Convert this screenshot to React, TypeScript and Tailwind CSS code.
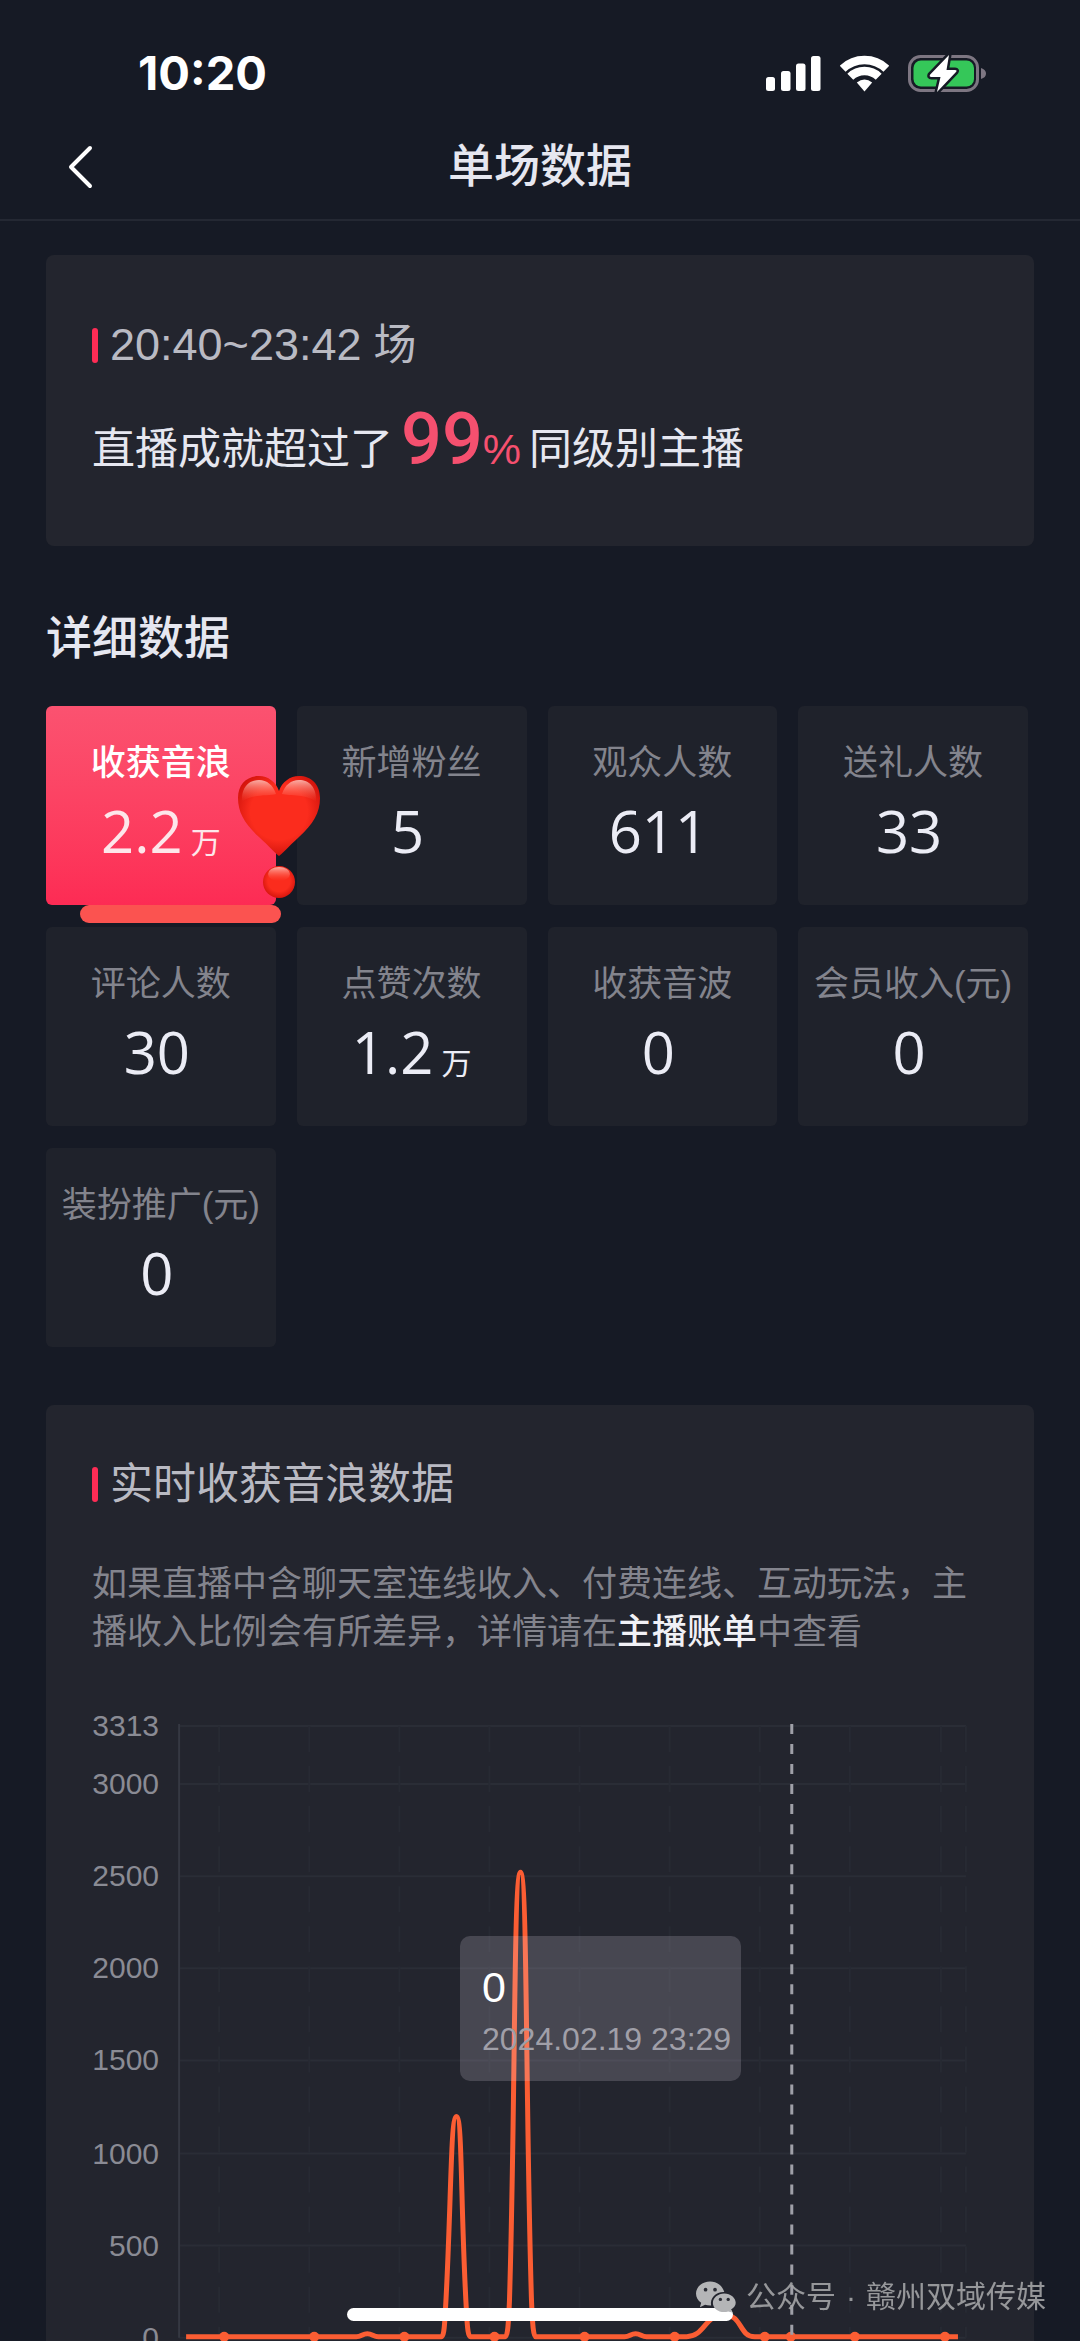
import { useState } from 'react';
import clsx from 'clsx';

const metrics = [
  { label: '收获音浪', value: '2.2', unit: '万' },
  { label: '新增粉丝', value: '5', unit: '' },
  { label: '观众人数', value: '611', unit: '' },
  { label: '送礼人数', value: '33', unit: '' },
  { label: '评论人数', value: '30', unit: '' },
  { label: '点赞次数', value: '1.2', unit: '万' },
  { label: '收获音波', value: '0', unit: '' },
  { label: '会员收入(元)', value: '0', unit: '' },
  { label: '装扮推广(元)', value: '0', unit: '' },
];

// 图表刻度
const yTicks = [3313, 3000, 2500, 2000, 1500, 1000, 500, 0];
const xTicks = [127, 217, 307, 397, 487, 577, 667, 757, 848, 873];
const dots = [132, 222, 312, 402, 492, 582, 672, 698, 762, 852];
const yPos = (value: number) => Math.round(633 - value * 0.1844);

function StatusIcons() {
  return (
    <div className="flex items-center gap-[19px]">
      <svg width="55" height="37" viewBox="0 0 55 37" fill="#fff">
        <rect x="0" y="22" width="9" height="14" rx="2.5" />
        <rect x="15" y="16" width="9.5" height="20" rx="2.5" />
        <rect x="30" y="8.5" width="9.5" height="27.5" rx="2.5" />
        <rect x="45" y="1" width="9.5" height="35" rx="2.5" />
      </svg>
      <svg width="49" height="37" viewBox="0 0 49 37" fill="none" stroke="#fff" strokeWidth="8.5">
        <path d="M2.6 13.8A31.5 31.5 0 0 1 46.4 13.8" />
        <path d="M10.3 21.8A20.5 20.5 0 0 1 38.7 21.8" />
        <path d="M24.5 36.5L16.8 27.6Q24.5 21.5 32.2 27.6Z" fill="#fff" stroke="none" />
      </svg>
      <svg width="78" height="37" viewBox="0 0 78 37">
        <rect x="1.5" y="1.5" width="68" height="34" rx="11" fill="none" stroke="#7d7682" strokeWidth="3" />
        <rect x="5.5" y="5.5" width="60.5" height="26" rx="7.5" fill="#35c759" />
        <path d="M73 13Q78 14.5 78 18.5Q78 22.5 73 24Z" fill="#7d7682" />
        <path
          d="M41 0L22 19.8Q21 22 23.4 22L32.5 22L29 37L48 17Q49.5 15 47 15L38.5 15Z"
          fill="#fff"
          stroke="#161a25"
          strokeWidth="5"
          strokeLinejoin="round"
          paintOrder="stroke"
        />
      </svg>
    </div>
  );
}

function HeartSticker() {
  return (
    <svg className="absolute top-[70px] left-[192px] z-10" width="82" height="122" viewBox="0 0 82 122">
      <defs>
        <radialGradient id="heart" cx="0.5" cy="0.45" r="0.58">
          <stop offset="0.6" stopColor="#fb2c1d" />
          <stop offset="1" stopColor="#d0120b" />
        </radialGradient>
        <linearGradient id="shine" x1="0" y1="0" x2="0" y2="1">
          <stop offset="0" stopColor="#ffd0c8" stopOpacity="0.8" />
          <stop offset="1" stopColor="#ff5a45" stopOpacity="0" />
        </linearGradient>
      </defs>
      <path
        d="M41 80C39 79 32 71 21 61C7 48 0 37 0 22C0 8 9 0 21 0C30 0 38 6 41 15C44 6 52 0 61 0C73 0 82 8 82 22C82 37 75 48 61 61C50 71 43 79 41 80Z"
        fill="url(#heart)"
      />
      <path d="M4 26C3 11 11 4 21 4C29 4 35 9 38 18C31 20 12 18 4 26Z" fill="url(#shine)" />
      <path d="M44 18C47 9 53 4 61 4C71 4 79 11 78 26C70 18 51 20 44 18Z" fill="url(#shine)" />
      <circle cx="41" cy="106" r="16" fill="url(#heart)" />
      <ellipse cx="41" cy="98" rx="11" ry="7" fill="url(#shine)" />
    </svg>
  );
}

function CardTitle({ children }: { children: React.ReactNode }) {
  return (
    <h2 className="flex items-center gap-3 text-[43px] leading-[56px] text-[#b9bac3]">
      <span className="h-[35px] w-1.5 rounded-sm bg-[#fe2c55]" />
      {children}
    </h2>
  );
}

function Chart() {
  return (
    <div className="relative mt-12">
      <svg className="block w-full" viewBox="0 0 895 636">
        {yTicks.map((tick) => (
          <g key={tick}>
            <text x="67" y={yPos(tick) + 10} textAnchor="end" fontSize="30" fill="#8a8b94">
              {tick}
            </text>
            <line x1="87" x2="873" y1={yPos(tick)} y2={yPos(tick)} stroke="#2a2d36" strokeWidth="2" />
          </g>
        ))}
        {xTicks.map((x) => (
          <line key={x} x1={x} x2={x} y1="22" y2="633" stroke="#272a33" strokeWidth="2" strokeDasharray="26 14" />
        ))}
        <line x1="87" x2="87" y1="20" y2="633" stroke="#353842" strokeWidth="2" />

        {/* 音浪曲线 */}
        <path
          d="M94 632H264C269 632 270 629 275 629C280 629 281 632 286 632H349C351 632 352 626 353 606C359 500 358 412 364 412C370 412 368 500 374 606C375 626 376 632 378 632H413C415 632 416 620 417 596C423 400 421 168 428 168C435 168 433 400 439 596C440 620 441 632 443 632H532C537 632 538 629 543 629C548 629 549 632 554 632H594C612 632 612 610 631 610C650 610 646 632 662 632H865"
          fill="none"
          stroke="#fb5d33"
          strokeWidth="5"
          strokeLinejoin="round"
        />
        {dots.map((x) => (
          <circle key={x} cx={x} cy="632" r="5" fill="#fb5d33" />
        ))}
        <line x1="699" x2="699" y1="20" y2="633" stroke="#9fa0a8" strokeWidth="3" strokeDasharray="10 10" />
      </svg>

      {/* 悬浮提示 */}
      <div className="absolute top-[232px] left-[368px] flex h-[145px] w-[281px] flex-col justify-center gap-1 rounded-[10px] bg-[#eee4f4]/18 pl-[22px]">
        <span className="text-[43px] leading-[56px] text-white">0</span>
        <span className="text-[32px] leading-10 whitespace-nowrap text-[#a09fa8]">2024.02.19 23:29</span>
      </div>
    </div>
  );
}

function Watermark() {
  return (
    <div className="fixed right-[34px] bottom-6 z-20 flex items-center gap-2.5 text-[30px] leading-10 whitespace-nowrap text-[#a3a4a6]/90">
      <svg width="40" height="32" viewBox="0 0 41 32" fill="#b4b5b7">
        <path d="M14.5 0C6.5 0 0 5.5 0 12.5C0 16.5 2 19.8 5.3 22L4 26.5L9.3 24C11 24.5 13 24.8 15.5 24.7C14 17 20.5 10.7 29 11C27.5 4.5 21.5 0 14.5 0Z" />
        <path d="M29 12.5C22.5 12.5 17.3 17 17.3 22.2C17.3 27.5 22.5 31.5 28.7 31.5C30.2 31.5 31.6 31.2 33 30.8L37 32L36 28.7C39 27 40.7 24.7 40.7 22C40.7 17 35.5 12.5 29 12.5Z" />
        <g fill="#2a2c35">
          <circle cx="9.8" cy="8.5" r="1.9" />
          <circle cx="19.5" cy="8.5" r="1.9" />
          <circle cx="25" cy="18.5" r="1.7" />
          <circle cx="33" cy="18.5" r="1.7" />
        </g>
      </svg>
      <span>公众号</span>
      <span>·</span>
      <span>赣州双域传媒</span>
    </div>
  );
}

export default function App() {
  const [active, setActive] = useState(0);

  return (
    <div className="min-h-screen bg-[#161a25] font-['Liberation_Sans','Noto_Sans_CJK_SC',sans-serif]">
      {/* 状态栏 */}
      <div className="flex h-[110px] items-center justify-between pt-9 pr-[94px] pl-[138px]">
        <span className="font-[Inter,sans-serif] text-[47px] font-bold text-white">10:20</span>
        <StatusIcons />
      </div>

      {/* 顶部导航 */}
      <header className="relative flex h-[111px] items-center justify-center border-b-2 border-[#242833] pt-1">
        <button className="absolute left-[66px]" aria-label="返回">
          <svg width="28" height="44" viewBox="0 0 28 44" fill="none" stroke="#fff" strokeWidth="4" strokeLinecap="round" strokeLinejoin="round">
            <path d="M24 3L5 22L24 41" />
          </svg>
        </button>
        <h1 className="text-[46px] font-medium text-[#e6e7f0]">单场数据</h1>
      </header>

      <main className="px-[46px] pt-[34px]">
        <section className="rounded-lg bg-[#23252e] px-[46px] pt-[62px] pb-16">
          <CardTitle>
            <span className="text-[45px]">20:40~23:42</span>
            <span>场</span>
          </CardTitle>
          <p className="mt-10 flex items-baseline text-[43px] leading-[66px] text-[#e6e7f0]">
            直播成就超过了
            <span className="ml-2 font-[Roboto,sans-serif] text-[72px] leading-[54px] font-medium text-[#f5506f]">99</span>
            <span className="mr-2 text-[#f5506f]">%</span>
            同级别主播
          </p>
        </section>

        <h2 className="mt-[60px] text-[46px] leading-[64px] font-medium text-[#e6e7f0]">详细数据</h2>

        <div className="mt-9 grid grid-cols-4 gap-x-[21px] gap-y-[22px] pr-1.5">
          {metrics.map((item, index) => (
            <div key={item.label} className="relative">
              <button
                onClick={() => setActive(index)}
                aria-pressed={active === index}
                className={clsx(
                  'flex w-full flex-col items-center rounded-md pt-[33px] pb-[42px]',
                  active === index ? 'bg-linear-to-b from-[#fb5270] to-[#fd2b54]' : 'bg-[#1f222b]'
                )}
              >
                <span
                  className={clsx(
                    'text-[35px] leading-[48px] whitespace-nowrap',
                    active === index ? 'font-medium text-white' : 'text-[#83848d]'
                  )}
                >
                  {item.label}
                </span>
                <span
                  className={clsx(
                    'mt-3 flex items-baseline gap-2 text-[58px] leading-[64px]',
                    active === index ? 'text-[#fde6ea]' : 'text-[#ebecf5]'
                  )}
                >
                  <span className="font-['Open_Sans',sans-serif] font-medium">{item.value}</span>
                  <span className="text-[30px] leading-[30px]">{item.unit}</span>
                </span>
              </button>
              {index === 0 && (
                <>
                  <HeartSticker />
                  <span className="absolute top-[199px] left-[34px] h-[18px] w-[201px] rounded-full bg-[#fb5350]" />
                </>
              )}
            </div>
          ))}
        </div>

        <section className="mt-[58px] rounded-t-lg bg-[#23252e] px-[46px] pt-[51px]">
          <CardTitle>实时收获音浪数据</CardTitle>
          <p className="mt-12 text-[35px] leading-[48px] text-[#83848d]">
            如果直播中含聊天室连线收入、付费连线、互动玩法，主播收入比例会有所差异，详情请在
            <a href="#bill" className="font-medium text-[#f1f1f6]">主播账单</a>
            中查看
          </p>
          <Chart />
        </section>
      </main>

      {/* 底部横条 */}
      <div className="fixed bottom-5 left-1/2 z-10 h-[13px] w-[386px] -translate-x-1/2 rounded-full bg-white" />
      <Watermark />
    </div>
  );
}
